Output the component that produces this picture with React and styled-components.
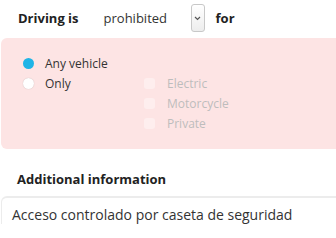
import styled, { createGlobalStyle } from "styled-components"

const GlobalStyle = createGlobalStyle`
    html, body {
        margin: 0;
        padding: 0;
        background: #ffffff;
        overflow: hidden;
    }
    body {
        font-family: "Open Sans", "Noto Sans", sans-serif;
        color: #333333;
    }
`

const options = ["Electric", "Motorcycle", "Private"]

function App(){
    return (
        <Page>
            <GlobalStyle/>
            <Header>
                <Label>Driving is</Label>
                <SelectBox>
                    <span>prohibited</span>
                    <Arrow>
                        <svg width="7" height="5" viewBox="0 0 7 5">
                            <path d="M1 1l2.5 2.5L6 1" stroke="#555" strokeWidth="1.2" fill="none"/>
                        </svg>
                    </Arrow>
                </SelectBox>
                <Label>for</Label>
            </Header>
            <Panel>
                <RadioCol>
                    <RadioRow>
                        <Radio checked/>
                        <span>Any vehicle</span>
                    </RadioRow>
                    <RadioRow>
                        <Radio/>
                        <span>Only</span>
                    </RadioRow>
                </RadioCol>
                <CheckCol>
                    {options.map((o) => (
                        <CheckRow key={o}>
                            <Check/>
                            <span>{o}</span>
                        </CheckRow>
                    ))}
                </CheckCol>
            </Panel>
            <SectionTitle>Additional information</SectionTitle>
            <InfoInput>Acceso controlado por caseta de seguridad</InfoInput>
        </Page>
    )
}

const Page = styled.div`
    width: 336px;
    height: 238px;
    overflow: hidden;
`

const Header = styled.div`
    display: flex;
    align-items: center;
    height: 34px;
    padding-left: 18px;
    padding-top: 1px;
    font-size: 13px;
`

const Label = styled.span`
    font-weight: 700;
    color: #222;
`

const SelectBox = styled.div`
    display: flex;
    align-items: center;
    margin-left: 25px;
    margin-right: 11px;
    color: #333;
    span{
        width: 87px;
    }
`

const Arrow = styled.div`
    width: 12px;
    height: 26px;
    border: 1px solid #c8c8c8;
    border-radius: 3px;
    background: linear-gradient(#ffffff, #ededed);
    display: flex;
    align-items: center;
    justify-content: center;
`

const Panel = styled.div`
    display: flex;
    margin-top: 3px;
    margin-left: 1px;
    width: 345px;
    height: 111px;
    background: #fde4e4;
    border-radius: 6px;
    box-sizing: border-box;
    padding: 16px 0 0 22px;
    font-size: 12px;
`

const RadioCol = styled.div`
    display: flex;
    flex-direction: column;
    gap: 2px;
    width: 121px;
`

const RadioRow = styled.div`
    display: flex;
    align-items: center;
    height: 18px;
    gap: 11px;
    color: #333;
`

const Radio = styled.span`
    width: 11px;
    height: 11px;
    border-radius: 50%;
    background: ${p => p.checked ? "#1fb4e6" : "#ffffff"};
    box-shadow: ${p => p.checked ? "none" : "0 0 1px rgba(0,0,0,0.25)"};
`

const CheckCol = styled.div`
    display: flex;
    flex-direction: column;
    gap: 2px;
    padding-top: 20px;
`

const CheckRow = styled.div`
    display: flex;
    align-items: center;
    height: 18px;
    gap: 12px;
    color: #bdbdbd;
`

const Check = styled.span`
    width: 11px;
    height: 11px;
    border-radius: 3px;
    background: #feeeee;
`

const SectionTitle = styled.div`
    font-size: 13px;
    font-weight: 700;
    color: #222;
    padding: 21px 0 0 17px;
    height: 26px;
`

const InfoInput = styled.div`
    margin-left: 1px;
    width: 345px;
    box-sizing: border-box;
    border-top: 2px solid #ececec;
    border-left: 1px solid #ececec;
    border-radius: 6px 0 0 0;
    padding: 7px 0 0 10px;
    font-size: 14px;
    color: #333;
`

export default App
